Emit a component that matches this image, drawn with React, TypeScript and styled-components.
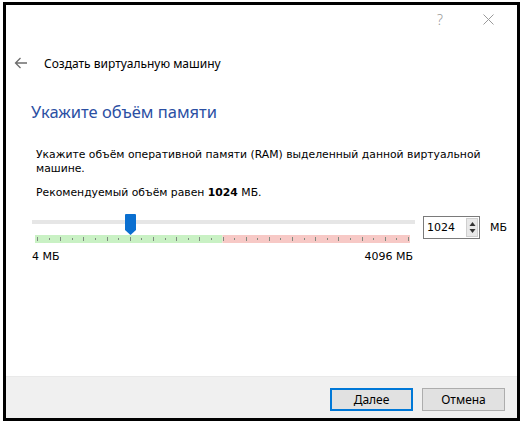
import React from 'react';
import styled, { createGlobalStyle } from 'styled-components';

const MIN_MB = 4;
const MAX_MB = 4096;
const VALUE_MB = 1024;
const TRACK_WIDTH = 375;
const TICK_COUNT = 33;

const GlobalStyle = createGlobalStyle`
  html, body {
    margin: 0;
    padding: 0;
    background: #ffffff;
  }
  * {
    box-sizing: border-box;
  }
`;

const BackArrow = () => (
  <svg width="14" height="12" viewBox="0 0 14 12">
    <path d="M13 6H1.5M6.5 1L1.5 6l5 5" fill="none" stroke="#6d6d6d" strokeWidth="1.3" />
  </svg>
);

const CloseIcon = () => (
  <svg width="11" height="11" viewBox="0 0 11 11">
    <path d="M0.5 0.5l10 10M10.5 0.5l-10 10" stroke="#9a9a9a" strokeWidth="1" />
  </svg>
);

const Handle = () => (
  <svg width="11" height="21" viewBox="0 0 11 21">
    <path d="M1 0h9a1 1 0 0 1 1 1v15l-5.5 5L0 16V1a1 1 0 0 1 1-1z" fill="#0a6fd0" />
  </svg>
);

const Scale = () => {
  const half = TRACK_WIDTH / 2;
  const ticks = Array.from({ length: TICK_COUNT }, (_, i) => 2 + (i * (TRACK_WIDTH - 4)) / (TICK_COUNT - 1));
  return (
    <svg width={TRACK_WIDTH} height="8" viewBox={`0 0 ${TRACK_WIDTH} 8`}>
      <rect x="0" y="0" width={half} height="8" fill="#c9f1c4" />
      <rect x={half} y="0" width={TRACK_WIDTH - half} height="8" fill="#f7c9c6" />
      {ticks.map((x, i) => (
        <rect key={i} x={Math.round(x)} y={i % 2 ? 3 : 2} width="1" height={i % 2 ? 2 : 4} fill="#7f8a7f" />
      ))}
    </svg>
  );
};

const SpinArrows = () => (
  <svg width="7" height="13" viewBox="0 0 7 13">
    <path d="M3.5 1L6.5 5H0.5z M3.5 12L0.5 8h6z" fill="#333" />
  </svg>
);

const App: React.FC = () => {
  const fraction = (VALUE_MB - MIN_MB) / (MAX_MB - MIN_MB);
  const handleLeft = 3 + fraction * TRACK_WIDTH - 3;

  return (
    <>
      <GlobalStyle />
      <Window>
        <TitleBar>
          <TitleButton>
            <Help>?</Help>
          </TitleButton>
          <TitleButton>
            <CloseIcon />
          </TitleButton>
        </TitleBar>

        <Header>
          <BackButton>
            <BackArrow />
          </BackButton>
          <WizardTitle>Создать виртуальную машину</WizardTitle>
        </Header>

        <Page>
          <Heading>Укажите объём памяти</Heading>
          <Description>
            Укажите объём оперативной памяти (RAM) выделенный данной виртуальной машине.
          </Description>
          <Recommended>
            Рекомендуемый объём равен <b>1024</b> МБ.
          </Recommended>

          <SliderRow>
            <SliderArea>
              <Groove />
              <ScaleWrap>
                <Scale />
              </ScaleWrap>
              <HandleWrap style={{ left: handleLeft }}>
                <Handle />
              </HandleWrap>
            </SliderArea>
            <SpinBox>
              <SpinValue>1024</SpinValue>
              <SpinButtons>
                <SpinArrows />
              </SpinButtons>
            </SpinBox>
            <Unit>МБ</Unit>
          </SliderRow>

          <Limits>
            <span>4 МБ</span>
            <span>4096 МБ</span>
          </Limits>
        </Page>

        <Footer>
          <Button $primary>
            <u>Д</u>алее
          </Button>
          <Button>Отмена</Button>
        </Footer>
      </Window>
    </>
  );
};

export default App;

const Window = styled.div`
  display: flex;
  flex-direction: column;
  width: 517px;
  height: 419px;
  margin: 2px 0 0 3px;
  border: 3px solid #000000;
  background: #ffffff;
`;

const TitleBar = styled.div`
  display: flex;
  justify-content: flex-end;
  height: 28px;
  padding-right: 5px;
`;

const TitleButton = styled.div`
  display: flex;
  align-items: center;
  justify-content: center;
  width: 48px;
  height: 28px;
`;

const Help = styled.span`
  font-family: 'Noto Sans', 'Open Sans', sans-serif;
  font-size: 14px;
  font-weight: 300;
  color: #9a9a9a;
`;

const Header = styled.div`
  display: flex;
  align-items: center;
  height: 30px;
  margin-top: 15px;
`;

const BackButton = styled.div`
  display: flex;
  align-items: center;
  justify-content: center;
  width: 24px;
  height: 30px;
  margin-left: 3px;
`;

const WizardTitle = styled.div`
  margin-left: 11px;
  font-family: 'Noto Sans', 'Open Sans', sans-serif;
  font-size: 12px;
  color: #000000;
`;

const Page = styled.div`
  display: flex;
  flex-direction: column;
  padding: 0 0 0 26px;
`;

const Heading = styled.h1`
  margin: 23px 0 0 -1px;
  font-family: 'Noto Sans', 'Open Sans', sans-serif;
  font-size: 16.5px;
  font-weight: 400;
  line-height: 22px;
  color: #2b4fa3;
`;

const bodyText = `
  font-family: 'DejaVu Sans', Tahoma, sans-serif;
  font-size: 11px;
  line-height: 14px;
  color: #000000;
`;

const Description = styled.p`
  ${bodyText}
  width: 462px;
  margin: 25px 0 0 4px;
  font-size: 10.8px;
`;

const Recommended = styled.p`
  ${bodyText}
  margin: 10px 0 0 4px;
  font-size: 10.8px;

  b {
    font-weight: bold;
  }
`;

const SliderRow = styled.div`
  display: flex;
  align-items: flex-start;
  margin-top: 12px;
`;

const SliderArea = styled.div`
  position: relative;
  width: 383px;
  height: 32px;
`;

const Groove = styled.div`
  height: 4px;
  margin-top: 8px;
  background: #e6e6e6;
`;

const ScaleWrap = styled.div`
  display: flex;
  margin: 11px 0 0 3px;
`;

const HandleWrap = styled.div`
  position: absolute;
  top: 2px;
  display: flex;
`;

const SpinBox = styled.div`
  display: flex;
  align-items: stretch;
  width: 57px;
  height: 23px;
  margin: 4px 0 0 8px;
  border: 1px solid #7a7a7a;
  background: #ffffff;
`;

const SpinValue = styled.div`
  ${bodyText}
  flex: 1;
  display: flex;
  align-items: center;
  padding-left: 3px;
`;

const SpinButtons = styled.div`
  display: flex;
  align-items: center;
  justify-content: center;
  width: 12px;
  margin: 1px;
  background: #e8e8e8;
  border: 1px solid #cfcfcf;
`;

const Unit = styled.div`
  ${bodyText}
  margin: 9px 0 0 10px;
`;

const Limits = styled.div`
  ${bodyText}
  display: flex;
  justify-content: space-between;
  width: 381px;
  margin-top: 6px;
`;

const Footer = styled.div`
  display: flex;
  justify-content: flex-end;
  gap: 9px;
  margin-top: auto;
  height: 42px;
  padding: 11px 12px 0 0;
  background: #f0f0f0;
  border-top: 1px solid #e9e9e9;
`;

const Button = styled.button<{ $primary?: boolean }>`
  width: 83px;
  height: 23px;
  padding: 0;
  font-family: 'Noto Sans', 'Open Sans', sans-serif;
  font-size: 12px;
  color: #000000;
  background: #e1e1e1;
  border: ${(p) => (p.$primary ? '2px solid #0078d7' : '1px solid #adadad')};

  u {
    text-decoration: underline;
  }
`;
